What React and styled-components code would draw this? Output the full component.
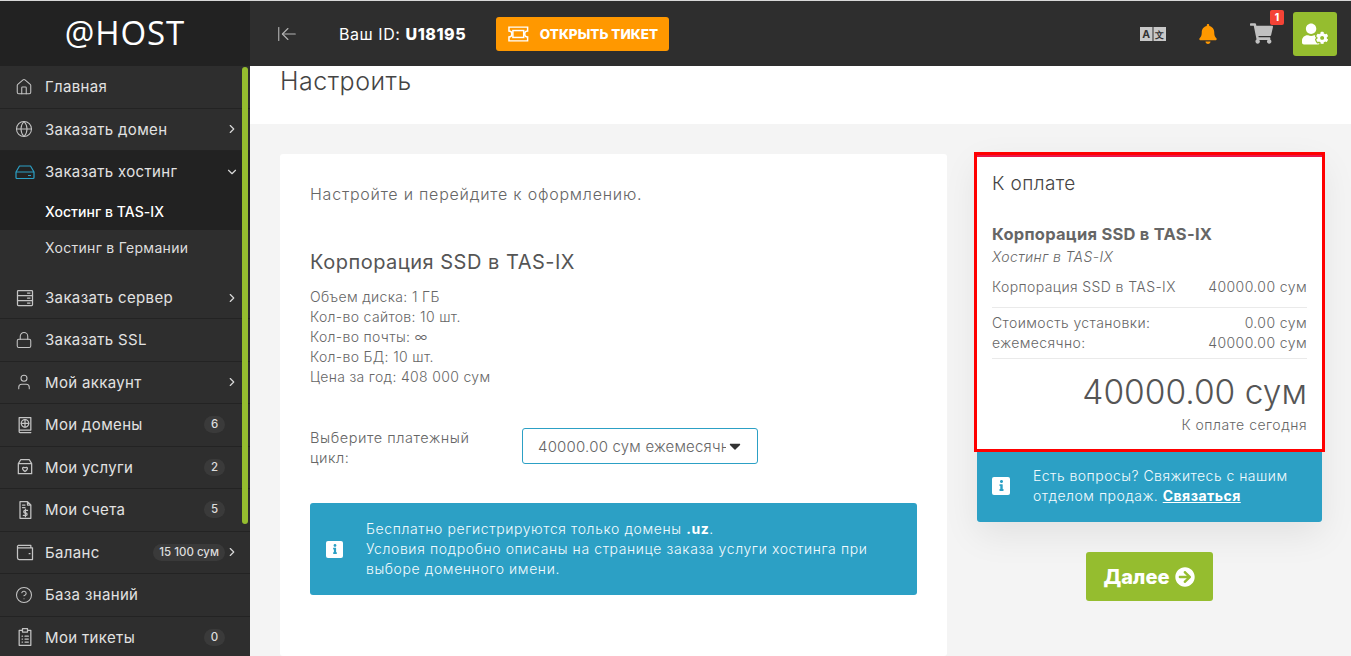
import React from 'react'
import styled, { createGlobalStyle } from 'styled-components'
import {
  ArrowLeftToLine,
  ChevronDown,
  ChevronRight,
  CircleHelp,
  Globe,
  House,
  Lock,
  User,
} from 'lucide-react'
import {
  FaArrowCircleRight,
  FaBell,
  FaCaretDown,
  FaInfo,
  FaShoppingCart,
  FaUserCog,
} from 'react-icons/fa'

const GlobalStyle = createGlobalStyle`
  html, body {
    margin: 0;
    height: 100%;
    overflow: hidden;
    background: #f4f4f4;
    font-family: Inter, "Noto Sans", sans-serif;
  }
  * { box-sizing: border-box; }
`

const Shell = styled.div`
  display: flex;
  flex-direction: column;
  height: 100vh;
  overflow: hidden;
  border-top: 1px solid #d8d8d8;
`

const TopBar = styled.header`
  display: flex;
  flex: 0 0 65px;
  align-items: center;
  background: #2e2e2e;
  color: #fff;
`

const LogoBox = styled.div`
  display: flex;
  align-items: center;
  justify-content: center;
  width: 250px;
  height: 100%;
  padding-bottom: 2px;
  background: #222;
  font-family: "Open Sans", sans-serif;
  font-size: 33px;
  letter-spacing: 0.9px;
`

const CollapseBtn = styled.span`
  display: flex;
  margin-left: 26px;
  color: #b4b4b4;
`

const UserId = styled.div`
  margin-left: 41px;
  font-size: 16px;
  letter-spacing: 0.55px;
  b { font-weight: 800; }
`

const TicketBtn = styled.button`
  display: flex;
  align-items: center;
  gap: 10px;
  width: 173px;
  height: 34px;
  margin-left: 30px;
  padding: 0 11px;
  border: 0;
  border-radius: 3px;
  background: #ff9800;
  color: #fff;
  font: 800 13.5px Inter, sans-serif;
  white-space: nowrap;
`

const TopIcons = styled.div`
  display: flex;
  align-items: center;
  margin-left: auto;
  margin-right: 14px;
`

const IconSlot = styled.span`
  position: relative;
  display: flex;
  margin-right: ${(p) => p.$gap}px;
  color: ${(p) => p.$color};
`

const CartBadge = styled.span`
  position: absolute;
  top: -12px;
  right: -11px;
  width: 14px;
  height: 15px;
  border-radius: 2px;
  background: #f44336;
  color: #fff;
  font-size: 10px;
  font-weight: 800;
  line-height: 15px;
  text-align: center;
`

const ProfileBtn = styled.span`
  display: flex;
  align-items: center;
  justify-content: center;
  width: 44px;
  height: 44px;
  border-radius: 3px;
  background: #95bd2f;
  color: #fff;
`

const Body = styled.div`
  display: flex;
  flex: 1;
  min-height: 0;
`

const Sidebar = styled.nav`
  position: relative;
  flex: 0 0 250px;
  overflow: hidden;
  background: #2e2e2e;
`

const ScrollThumb = styled.span`
  position: absolute;
  top: 1px;
  right: 2px;
  width: 6px;
  height: 457px;
  border-radius: 3px;
  background: #95bd2f;
`

const MenuRow = styled.div`
  display: flex;
  align-items: center;
  height: ${(p) => p.$height || 42.5}px;
  padding: 0 11px 0 15px;
  border-bottom: ${(p) => (p.$plain ? '0' : '1px solid #232323')};
  background: ${(p) => (p.$active ? '#222' : 'transparent')};
  color: #e2e2e2;
  font-size: 15px;
  letter-spacing: 0.35px;
`

const MenuIcon = styled.span`
  display: flex;
  flex: 0 0 30px;
  color: ${(p) => p.$color || '#c4c4c4'};
`

const MenuLabel = styled.span`
  flex: 1;
  white-space: nowrap;
`

const Count = styled.span`
  margin-right: ${(p) => (p.$arrow ? 0 : 14)}px;
  min-width: 21px;
  height: 17px;
  padding: 0 6px;
  border-radius: 9px;
  background: #3a3a3a;
  color: #ddd;
  font-size: 11.5px;
  font-weight: 500;
  letter-spacing: 0;
  line-height: 17px;
  text-align: center;
  white-space: nowrap;
`

const Arrow = styled.span`
  display: flex;
  width: 14px;
  color: #d8d8d8;
`

const SubRow = styled.div`
  display: flex;
  align-items: center;
  height: ${(p) => p.$height}px;
  padding: 0 0 ${(p) => p.$pad || 0}px 45px;
  background: ${(p) => (p.$active ? '#222' : 'transparent')};
  color: ${(p) => (p.$active ? '#fff' : '#dedede')};
  font-size: 14px;
  font-weight: ${(p) => (p.$active ? 500 : 400)};
  letter-spacing: ${(p) => (p.$active ? 0.05 : 0.3)}px;
`

const Main = styled.main`
  flex: 1;
  min-width: 0;
`

const TitleBand = styled.div`
  height: 58px;
  padding-left: 30px;
  background: #fff;
  color: #444;
  font-size: 25px;
  font-weight: 300;
  letter-spacing: 0.5px;
  line-height: 30px;
`

const Columns = styled.div`
  display: grid;
  grid-template-columns: 667px 345px;
  gap: 30px;
  align-items: start;
  padding: 30px;
`

const OptionsCard = styled.section`
  height: 502px;
  padding: 30px;
  border-radius: 3px;
  background: #fff;
  color: #666;
`

const Lead = styled.p`
  margin: 0 0 45px;
  font-size: 16px;
  font-weight: 300;
  letter-spacing: 0.77px;
  line-height: 20px;
`

const ProductTitle = styled.h2`
  margin: 0 0 12px;
  color: #555;
  font-size: 20px;
  font-weight: 400;
  letter-spacing: 0.5px;
  line-height: 26px;
`

const Specs = styled.div`
  margin-bottom: 41px;
  font-size: 14px;
  font-weight: 300;
  letter-spacing: 0.33px;
  line-height: 20px;
`

const CycleRow = styled.div`
  display: flex;
  gap: 42px;
  align-items: flex-start;
  margin-bottom: 35px;
`

const CycleLabel = styled.label`
  flex: 0 0 170px;
  font-size: 14.5px;
  font-weight: 300;
  letter-spacing: 0.55px;
  line-height: 20px;
`

const SelectBox = styled.div`
  display: flex;
  align-items: center;
  width: 236px;
  height: 36px;
  padding: 0 13px 0 15px;
  border: 1px solid #2ca0c5;
  border-radius: 3px;
  font-size: 15px;
  font-weight: 300;
  letter-spacing: 0.2px;
  color: #666;
`

const SelectValue = styled.span`
  flex: 1;
  overflow: hidden;
  white-space: nowrap;
`

const Notice = styled.div`
  display: flex;
  align-items: center;
  padding: ${(p) => (p.$compact ? '16.5px 15px' : '16px')};
  border-radius: 3px;
  background: #2ca0c5;
  color: #f3fbfe;
  font-size: 14px;
  font-weight: 300;
  letter-spacing: ${(p) => (p.$compact ? 0.48 : 0.6)}px;
  line-height: 20px;
  b { font-weight: 700; color: #fff; }
  a { font-weight: 700; color: #fff; text-decoration: underline; }
`

const NoticeIconCell = styled.span`
  display: flex;
  flex: 0 0 ${(p) => p.$width}px;
`

const InfoBadge = styled.span`
  display: flex;
  align-items: center;
  justify-content: center;
  width: ${(p) => p.$size}px;
  height: ${(p) => p.$size}px;
  border-radius: 2px;
  background: #fff;
  color: #2ca0c5;
`

const SummaryColumn = styled.aside`
  display: flex;
  flex-direction: column;
  align-items: center;
`

const SummaryStack = styled.div`
  width: 100%;
  box-shadow: 0 12px 34px rgba(0, 0, 0, 0.08);
`

const SummaryCard = styled.section`
  height: 294px;
  margin-top: 1px;
  padding: 13px 15px 0;
  border-top: 2px solid #e8174c;
  outline: 3px solid #f00;
  background: #fff;
  color: #666;
`

const SummaryHeading = styled.h3`
  margin: 0 0 24px;
  color: #444;
  font-size: 19px;
  font-weight: 300;
  letter-spacing: 0.4px;
  line-height: 28px;
`

const SummaryName = styled.div`
  margin-bottom: 1px;
  font-size: 16.5px;
  font-weight: 700;
  letter-spacing: 0.25px;
  line-height: 24px;
`

const SummaryGroup = styled.div`
  font-style: italic;
  font-size: 14px;
  font-weight: 300;
  letter-spacing: 0.4px;
  line-height: 20px;
`

const PriceGroup = styled.div`
  padding: ${(p) => (p.$first ? '10px 0 10px' : '5px 0 5px')};
  border-bottom: 1px solid #eaeaea;
  font-size: 14px;
  font-weight: 300;
  letter-spacing: 0.4px;
  line-height: 20px;
`

const PriceRow = styled.div`
  display: flex;
  justify-content: space-between;
  white-space: nowrap;
`

const TotalPrice = styled.div`
  margin-top: 11px;
  color: #555;
  font-size: 33.5px;
  font-weight: 300;
  line-height: 44px;
  text-align: right;
`

const TotalCaption = styled.div`
  margin-top: -1px;
  font-size: 14px;
  font-weight: 300;
  letter-spacing: 0.5px;
  line-height: 24px;
  text-align: right;
`

const NextBtn = styled.button`
  display: flex;
  align-items: center;
  justify-content: center;
  gap: 6px;
  width: 127px;
  height: 49px;
  margin-top: 30px;
  border: 0;
  border-radius: 3px;
  background: #95bd2f;
  color: #fff;
  font: 800 20px Inter, sans-serif;
`

const SvgIcon = ({ size = 20, children }) => (
  <svg width={size} height={size} viewBox="0 0 24 24" fill="none" stroke="currentColor" strokeWidth="1.5" strokeLinecap="round" strokeLinejoin="round">
    {children}
  </svg>
)

const DriveIcon = () => (
  <svg width="20" height="20" viewBox="0 0 20 20" fill="none" stroke="currentColor" strokeWidth="1.2" strokeLinejoin="round">
    <path d="M1 10 4.5 4h11L19 10v5.5a1 1 0 0 1-1 1H2a1 1 0 0 1-1-1z" />
    <path d="M1 10h18M13 13.5h3" />
  </svg>
)

const ServerIcon = () => (
  <SvgIcon>
    <rect x="3" y="3" width="18" height="18" rx="1" />
    <path d="M3 9h18M3 15h18M15 6h3M15 12h3M15 18h3" />
  </SvgIcon>
)

const PassportIcon = () => (
  <SvgIcon>
    <path d="M5 3h14v15H5zM5 18v2a1 1 0 0 0 1 1h13" />
    <circle cx="12" cy="10" r="4.5" />
    <path d="M7.500 10h9M12 5.500v9" />
  </SvgIcon>
)

const BoxIcon = () => (
  <SvgIcon>
    <path d="M7 3h10l3 5v12H4V8zM4 8h16" />
    <path d="M12 17.500c-5-3.500-2.500-6.500 0-4.500 2.500-2 5 1 0 4.500z" />
  </SvgIcon>
)

const InvoiceIcon = () => (
  <SvgIcon>
    <path d="M6 2h9l4 4v16H6zM15 2v4h4M9 6h3M9 9h3" />
    <path d="M15 12.500h-3a1.500 1.500 0 0 0 0 3h1a1.500 1.500 0 0 1 0 3H10M12.500 11v9" />
  </SvgIcon>
)

const WalletIcon = () => (
  <SvgIcon>
    <path d="M4 4h15v3h2v14H5a2 2 0 0 1-2-2V5zM4 7h15" />
    <path d="M17 14h1" />
  </SvgIcon>
)

const ClipboardIcon = () => (
  <SvgIcon>
    <path d="M9 4H5v18h14V4h-4M9 2h6v4H9zM8.500 11h.5M8.500 14.500h.5M8.500 18h.5M12 11h4M12 14.500h4M12 18h4" />
  </SvgIcon>
)

const TicketIcon = () => (
  <svg width="23" height="16" viewBox="0 0 23 16" fill="none" stroke="currentColor" strokeWidth="1.5">
    <path d="M2 1h19v4a3 3 0 0 0 0 6v4H2v-4a3 3 0 0 0 0-6z" />
    <rect x="6" y="4.500" width="11" height="7" />
  </svg>
)

const TranslateIcon = () => (
  <svg width="26" height="14" viewBox="0 0 26 14">
    <rect x="0" y="0" width="12.500" height="14" fill="#c8c8c8" />
    <rect x="13.500" y="0" width="12.500" height="14" fill="#c8c8c8" />
    <text x="6.250" y="11" fontSize="10.500" fontWeight="700" fill="#333" textAnchor="middle">A</text>
    <text x="19.750" y="11" fontSize="9" fontWeight="700" fill="#333" textAnchor="middle">文</text>
  </svg>
)

const MENU_TOP = [
  { label: 'Главная', icon: <House size={18} strokeWidth={1.4} /> },
  { label: 'Заказать домен', icon: <Globe size={18} strokeWidth={1.4} />, arrow: true },
]

const MENU_BOTTOM = [
  { label: 'Заказать сервер', icon: <ServerIcon />, arrow: true, height: 42 },
  { label: 'Заказать SSL', icon: <Lock size={18} strokeWidth={1.4} /> },
  { label: 'Мой аккаунт', icon: <User size={18} strokeWidth={1.4} />, arrow: true },
  { label: 'Мои домены', icon: <PassportIcon />, count: '6' },
  { label: 'Мои услуги', icon: <BoxIcon />, count: '2' },
  { label: 'Мои счета', icon: <InvoiceIcon />, count: '5' },
  { label: 'Баланс', icon: <WalletIcon />, count: '15 100 сум', arrow: true },
  { label: 'База знаний', icon: <CircleHelp size={18} strokeWidth={1.4} /> },
  { label: 'Мои тикеты', icon: <ClipboardIcon />, count: '0' },
]

const NavItem = ({ item }) => (
  <MenuRow $height={item.height}>
    <MenuIcon>{item.icon}</MenuIcon>
    <MenuLabel>{item.label}</MenuLabel>
    {item.count && <Count $arrow={item.arrow}>{item.count}</Count>}
    {item.arrow && (
      <Arrow>
        <ChevronRight size={14} strokeWidth={2} />
      </Arrow>
    )}
  </MenuRow>
)

const App = () => (
  <Shell>
    <GlobalStyle />
    <TopBar>
      <LogoBox>@HOST</LogoBox>
      <CollapseBtn>
        <ArrowLeftToLine size={22} strokeWidth={1.2} />
      </CollapseBtn>
      <UserId>
        Ваш ID: <b>U18195</b>
      </UserId>
      <TicketBtn>
        <TicketIcon />
        ОТКРЫТЬ ТИКЕТ
      </TicketBtn>
      <TopIcons>
        <IconSlot $gap={32} $color="#c8c8c8">
          <TranslateIcon />
        </IconSlot>
        <IconSlot $gap={32} $color="#ff9800">
          <FaBell size={20} />
        </IconSlot>
        <IconSlot $gap={20} $color="#c0c0c0">
          <FaShoppingCart size={23} />
          <CartBadge>1</CartBadge>
        </IconSlot>
        <ProfileBtn>
          <FaUserCog size={26} />
        </ProfileBtn>
      </TopIcons>
    </TopBar>
    <Body>
      <Sidebar>
        <ScrollThumb />
        {MENU_TOP.map((item) => (
          <NavItem item={item} key={item.label} />
        ))}
        <MenuRow $active $plain $height={41}>
          <MenuIcon $color="#2ca0c5">
            <DriveIcon />
          </MenuIcon>
          <MenuLabel>Заказать хостинг</MenuLabel>
          <Arrow>
            <ChevronDown size={14} strokeWidth={2} />
          </Arrow>
        </MenuRow>
        <SubRow $active $height={38}>Хостинг в TAS-IX</SubRow>
        <SubRow $height={47} $pad={13}>Хостинг в Германии</SubRow>
        {MENU_BOTTOM.map((item) => (
          <NavItem item={item} key={item.label} />
        ))}
      </Sidebar>
      <Main>
        <TitleBand>Настроить</TitleBand>
        <Columns>
          <OptionsCard>
            <Lead>Настройте и перейдите к оформлению.</Lead>
            <ProductTitle>Корпорация SSD в TAS-IX</ProductTitle>
            <Specs>
              Объем диска: 1 ГБ
              <br />
              Кол-во сайтов: 10 шт.
              <br />
              Кол-во почты: ∞
              <br />
              Кол-во БД: 10 шт.
              <br />
              Цена за год: 408 000 сум
            </Specs>
            <CycleRow>
              <CycleLabel>Выберите платежный цикл:</CycleLabel>
              <SelectBox>
                <SelectValue>40000.00 сум ежемесячно</SelectValue>
                <FaCaretDown size={18} color="#333" />
              </SelectBox>
            </CycleRow>
            <Notice>
              <NoticeIconCell $width={40}>
                <InfoBadge $size={17}>
                  <FaInfo size={10} />
                </InfoBadge>
              </NoticeIconCell>
              <div>
                Бесплатно регистрируются только домены <b>.uz</b>.
                <br />
                Условия подробно описаны на странице заказа услуги хостинга при выборе доменного имени.
              </div>
            </Notice>
          </OptionsCard>
          <SummaryColumn>
            <SummaryStack>
              <SummaryCard>
                <SummaryHeading>К оплате</SummaryHeading>
                <SummaryName>Корпорация SSD в TAS-IX</SummaryName>
                <SummaryGroup>Хостинг в TAS-IX</SummaryGroup>
                <PriceGroup $first>
                  <PriceRow>
                    <span>Корпорация SSD в TAS-IX</span>
                    <span>40000.00 сум</span>
                  </PriceRow>
                </PriceGroup>
                <PriceGroup>
                  <PriceRow>
                    <span>Стоимость установки:</span>
                    <span>0.00 сум</span>
                  </PriceRow>
                  <PriceRow>
                    <span>ежемесячно:</span>
                    <span>40000.00 сум</span>
                  </PriceRow>
                </PriceGroup>
                <TotalPrice>40000.00 сум</TotalPrice>
                <TotalCaption>К оплате сегодня</TotalCaption>
              </SummaryCard>
              <Notice $compact>
                <NoticeIconCell $width={41}>
                  <InfoBadge $size={18}>
                    <FaInfo size={11} />
                  </InfoBadge>
                </NoticeIconCell>
                <div>
                  Есть вопросы? Свяжитесь с нашим отделом продаж. <a>Связаться</a>
                </div>
              </Notice>
            </SummaryStack>
            <NextBtn>
              Далее <FaArrowCircleRight size={20} />
            </NextBtn>
          </SummaryColumn>
        </Columns>
      </Main>
    </Body>
  </Shell>
)

export default App
